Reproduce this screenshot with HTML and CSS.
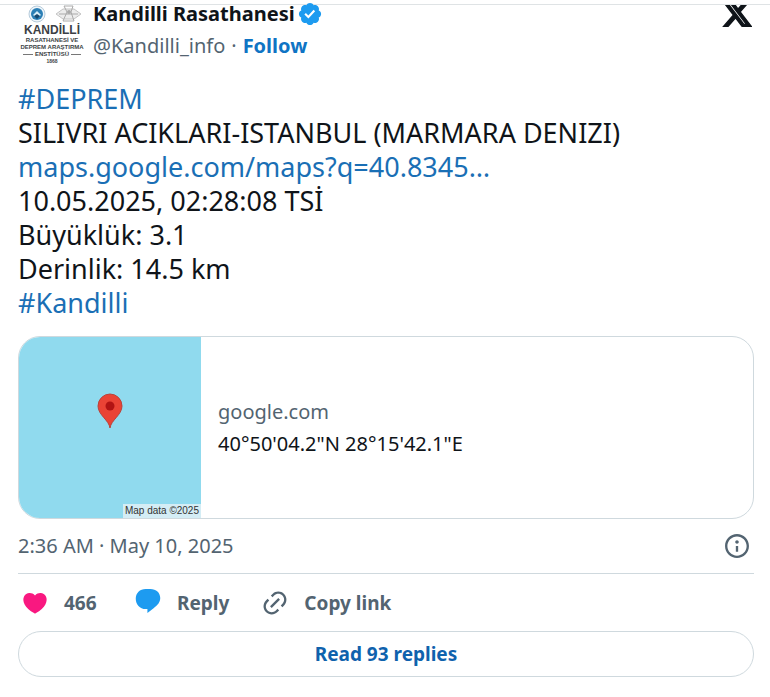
FILE: index.html
```html
<!DOCTYPE html>
<html lang="tr">
<head>
	<meta charset="utf-8">
	<title>Kandilli Rasathanesi</title>
	<link rel="stylesheet" href="styles.css">
</head>
<body>

	<article class="tweet">
		<header class="header">
			<a class="avatar" href="#" aria-label="Kandilli Rasathanesi">
				<svg class="emblem" viewBox="0 0 60 18" aria-hidden="true">
					<circle cx="15" cy="9" r="8" fill="#eef5fa" stroke="#b5cbdb"/>
					<circle cx="15" cy="9" r="6" fill="#2b7fb5"/>
					<path d="M11 10l4-4 4 4-4 3z" fill="#d8edf7"/>
					<path d="M12 11l3-2 3 2-3 3z" fill="#17486f"/>
					<path d="M34 9l7-5h11l7 5-7 5H41z" fill="#ececec" stroke="#c4c4c4"/>
					<path d="M42 1h9l-2 6 3 9H41l4-9zM37 9h19" fill="none" stroke="#aaa"/>
					<circle cx="47" cy="7" r="2" fill="#aaa"/>
				</svg>
				<span class="logo-name">KANDİLLİ</span>
				<span class="logo-line">RASATHANESİ VE</span>
				<span class="logo-line">DEPREM ARAŞTIRMA</span>
				<span class="logo-line ruled">ENSTİTÜSÜ</span>
				<span class="logo-year">1868</span>
			</a>
			<div class="author">
				<a class="name" href="#">Kandilli Rasathanesi
					<svg class="verified" viewBox="0 0 22 22" aria-hidden="true">
						<path fill="#1d9bf0" d="M20.396 11c-.018-.646-.215-1.275-.57-1.816-.354-.54-.852-.972-1.438-1.246.223-.607.27-1.264.14-1.897-.131-.634-.437-1.218-.882-1.687-.47-.445-1.053-.75-1.687-.882-.633-.13-1.29-.083-1.897.14-.273-.587-.704-1.086-1.245-1.44S11.647 1.62 11 1.604c-.646.017-1.273.213-1.813.568s-.969.854-1.24 1.44c-.608-.223-1.267-.272-1.902-.14-.635.13-1.22.436-1.69.882-.445.47-.749 1.055-.878 1.688-.13.633-.08 1.29.144 1.896-.587.274-1.087.705-1.443 1.245-.356.54-.555 1.17-.574 1.817.02.647.218 1.276.574 1.817.356.54.856.972 1.443 1.245-.224.606-.274 1.263-.144 1.896.13.634.433 1.218.877 1.688.47.443 1.054.747 1.687.878.633.132 1.29.084 1.897-.136.274.586.705 1.084 1.246 1.439.54.354 1.17.551 1.816.569.647-.016 1.276-.213 1.817-.567s.972-.854 1.245-1.44c.604.239 1.266.296 1.903.164.636-.132 1.22-.447 1.68-.907.46-.46.776-1.044.908-1.681s.075-1.299-.165-1.903c.586-.274 1.084-.705 1.439-1.246.354-.54.551-1.17.569-1.816z"/>
						<path fill="#fff" d="M9.662 14.85l-3.429-3.428 1.293-1.302 2.072 2.072 4.4-4.794 1.347 1.246z"/>
					</svg>
				</a>
				<div class="handle">
					<a class="muted" href="#">@Kandilli_info</a>
					<span>·</span>
					<a class="follow" href="#">Follow</a>
				</div>
			</div>
			<a class="x-logo" href="#" aria-label="View on X">
				<svg viewBox="1 5.5 22 16.2" aria-hidden="true">
					<path d="M18.244 2.250h3.308l-7.227 8.260 8.502 11.240H16.170l-5.214-6.817L4.990 21.750H1.680l7.730-8.835L1.254 2.250H8.080l4.713 6.231zm-1.161 17.520h1.833L7.084 4.126H5.117z"/>
				</svg>
			</a>
		</header>

		<p class="text">
			<a href="#">#DEPREM</a><br>
			SILIVRI ACIKLARI-ISTANBUL (MARMARA DENIZI)<br>
			<a href="#">maps.google.com/maps?q=40.8345…</a><br>
			10.05.2025, 02:28:08 TSİ<br>
			Büyüklük: 3.1<br>
			Derinlik: 14.5 km<br>
			<a href="#">#Kandilli</a>
		</p>

		<a class="card" href="#">
			<div class="map">
				<svg class="pin" viewBox="0 0 26 36" aria-hidden="true">
					<path d="M13 35C12 27 1 22 1 13a12 12 0 0 1 24 0c0 9-11 14-12 22z" fill="#ea4335" stroke="#b8433c"/>
					<circle cx="13" cy="13" r="4.5" fill="#b11313"/>
				</svg>
				<span class="credit">Map data ©2025</span>
			</div>
			<div class="place">
				<span class="muted">google.com</span>
				<span>40°50'04.2"N 28°15'42.1"E</span>
			</div>
		</a>

		<div class="info">
			<a class="muted" href="#">2:36 AM · May 10, 2025</a>
			<a class="info-link" href="#" aria-label="Ads info and privacy">
				<svg viewBox="0 0 24 24" aria-hidden="true">
					<path d="M13.5 8.5c0 .83-.67 1.5-1.5 1.5s-1.5-.67-1.5-1.5S11.17 7 12 7s1.500.67 1.500 1.500zM13 17v-5h-2v5h2zm-1 5.250c5.660 0 10.250-4.590 10.250-10.250S17.660 1.750 12 1.750 1.750 6.340 1.750 12 6.340 22.250 12 22.250zM20.250 12c0 4.560-3.690 8.250-8.250 8.250S3.750 16.560 3.750 12 7.440 3.750 12 3.750s8.250 3.690 8.250 8.250z"/>
				</svg>
			</a>
		</div>

		<div class="actions">
			<button class="action" type="button" aria-label="Like">
				<svg viewBox="0 0 24 24" fill="#f91880" aria-hidden="true">
					<path d="M20.884 13.190c-1.351 2.480-4.001 5.120-8.379 7.670l-.503.300-.504-.300c-4.379-2.550-7.029-5.190-8.382-7.670-1.360-2.500-1.410-4.860-.514-6.670.887-1.790 2.647-2.910 4.601-3.010 1.651-.090 3.368.560 4.798 2.010 1.429-1.450 3.146-2.100 4.796-2.010 1.954.100 3.714 1.220 4.601 3.010.896 1.810.846 4.170-.514 6.670z"/>
				</svg>
				<span class="count">466</span>
			</button>
			<button class="action" type="button">
				<svg viewBox="0 0 24 24" fill="#1d9bf0" aria-hidden="true">
					<path d="M10 0h4c5 0 8.500 3.200 8.500 7.800 0 3.600-2.400 6.400-5.700 8.600L11.500 20.500v-3.300H10c-5 0-8.500-4-8.500-8.900C1.500 3.500 5 0 10 0z"/>
				</svg>
				Reply
			</button>
			<button class="action" type="button">
				<svg viewBox="0 0 24 24" fill="#536471" aria-hidden="true">
					<path d="M18.360 5.640c-1.950-1.960-5.110-1.960-7.070 0L9.880 7.050 8.460 5.640l1.420-1.420c2.730-2.730 7.160-2.730 9.900 0 2.730 2.740 2.730 7.170 0 9.900l-1.420 1.420-1.410-1.420 1.410-1.410c1.960-1.960 1.960-5.120 0-7.070zm-2.120 3.530l-7.070 7.070-1.410-1.410 7.070-7.070 1.410 1.410zm-12.020.710l1.420-1.420 1.410 1.420-1.410 1.410c-1.960 1.960-1.960 5.120 0 7.070 1.950 1.960 5.110 1.960 7.070 0l1.410-1.410 1.420 1.410-1.420 1.420c-2.730 2.730-7.160 2.730-9.900 0-2.730-2.740-2.730-7.170 0-9.900z"/>
				</svg>
				Copy link
			</button>
		</div>

		<a class="replies" href="#">Read 93 replies</a>
	</article>

</body>
</html>
```

FILE: styles.css
```css
body{
	margin: 0;
	padding-top: 4px;
	background: #fff;
	color: #0f1419;
	font-family: "Noto Sans", "Open Sans", sans-serif;
	font-size: 20px;
	line-height: 32px;
}

a{
	color: inherit;
	text-decoration: none;
}

svg{
	display: block;
	flex: none;
}

.tweet{
	padding: 0 16px 20px 18px;
	border-top: 1px solid #dfe3e5;
}

.header{
	display: flex;
	align-items: flex-start;
}

.avatar{
	width: 68px;
	margin-right: 7px;
	display: flex;
	flex-direction: column;
	align-items: center;
	color: #3c3f45;
	font-family: "Liberation Sans", sans-serif;
	font-weight: bold;
}

.emblem{
	width: 60px;
	height: 18px;
}

.logo-name{
	font-size: 12px;
	line-height: 14px;
}

.logo-line{
	font-size: 6px;
	line-height: 7px;
	white-space: nowrap;
}

.ruled{
	display: flex;
	align-items: center;
	gap: 2px;
}

.ruled::before,
.ruled::after{
	content: "";
	width: 10px;
	height: 1px;
	background: #777;
}

.logo-year{
	font-size: 5px;
	line-height: 6px;
}

.author{
	flex: 1;
}

.name{
	display: flex;
	align-items: center;
	gap: 2px;
	font-weight: bold;
	line-height: 18px;
}

.verified{
	width: 26px;
	height: 26px;
	margin: -4px 0;
}

.handle{
	display: flex;
	gap: 6px;
	margin-top: 7px;
	color: #536471;
}

.muted{
	color: #536471;
}

.follow{
	color: #0f74c4;
	font-weight: bold;
}

.x-logo svg{
	width: 30px;
	height: 22px;
	margin-right: 2px;
	fill: #0f1419;
	stroke: #0f1419;
}

.text{
	margin: 18px 0 16px;
	font-size: 27px;
	line-height: 34px;
}

.text a{
	color: #1a6fb5;
}

.card{
	display: flex;
	border: 1px solid #cfd9de;
	border-radius: 22px;
	overflow: hidden;
}

.map{
	position: relative;
	display: flex;
	align-items: center;
	justify-content: center;
	width: 182px;
	height: 181px;
	background: #90daee;
}

.pin{
	width: 26px;
	height: 36px;
	margin-bottom: 34px;
}

.credit{
	position: absolute;
	right: 0;
	bottom: 0;
	padding: 0 2px;
	background: #d4edf5;
	color: #333;
	font-family: "Liberation Sans", sans-serif;
	font-size: 10px;
	line-height: 14px;
}

.place{
	display: flex;
	flex-direction: column;
	justify-content: center;
	padding-left: 17px;
}

.info{
	display: flex;
	align-items: center;
	justify-content: space-between;
	height: 54px;
	border-bottom: 1px solid #cfd9de;
}

.info-link svg{
	width: 28px;
	height: 28px;
	margin-right: 3px;
	fill: #536471;
}

.actions{
	display: flex;
	gap: 29px;
	padding: 13px 0 12px;
}

.action{
	display: flex;
	align-items: center;
	gap: 15px;
	padding: 0 0 0 3px;
	border: 0;
	background: none;
	color: #536471;
	font: inherit;
	font-size: 19px;
	font-weight: bold;
}

.action svg{
	width: 28px;
	height: 28px;
}

.count{
	min-width: 38px;
	text-align: left;
}

.replies{
	display: block;
	padding: 6px 0;
	border: 1px solid #cfd9de;
	border-radius: 23px;
	color: #0f62ad;
	font-size: 19px;
	font-weight: bold;
	text-align: center;
}
```
